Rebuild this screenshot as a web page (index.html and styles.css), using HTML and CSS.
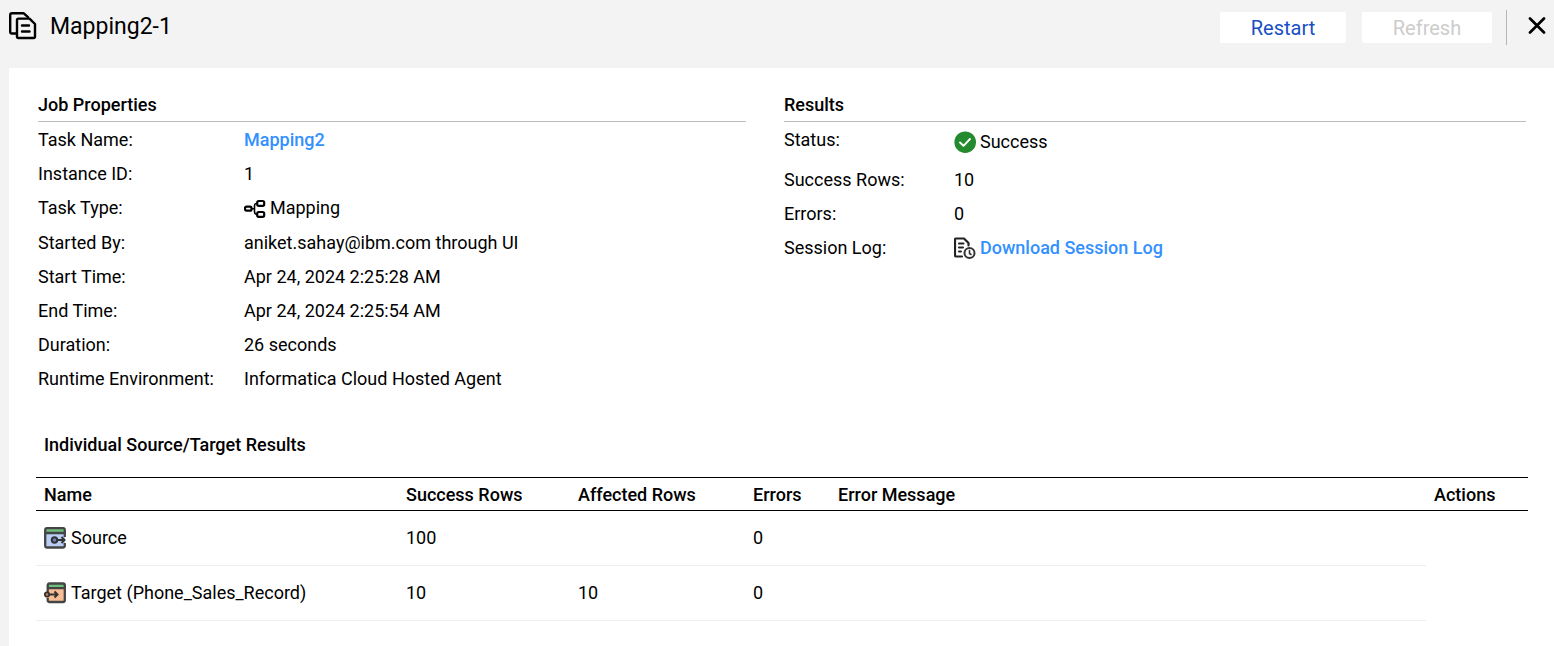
FILE: index.html
```html
<!DOCTYPE html>
<html lang="en">
<head>
<meta charset="utf-8">
<meta name="viewport" content="width=device-width, initial-scale=1">
<title>Mapping2-1</title>
<link rel="stylesheet" href="styles.css">
</head>
<body>
<header class="topbar">
  <svg class="job-icon" viewBox="0 0 28 28" fill="none" stroke="#000" stroke-width="2.400" stroke-linejoin="round" stroke-linecap="round" aria-hidden="true">
    <path d="M7 21.500H3Q1.200 21.500 1.200 19.700V3Q1.200 1.200 3 1.200H14.500L19 5.200"/>
    <path d="M9.500 6.600H20.500L26 12V24.500Q26 26 24.500 26H9.500Q8 26 8 24.500V8Q8 6.600 9.500 6.600Z"/>
    <path d="M13 13.500H20M13 19.500H20.500"/>
  </svg>
  <h1 class="title">Mapping2-1</h1>
  <div class="actions">
    <button class="button" type="button">Restart</button>
    <button class="button button-refresh" type="button" disabled>Refresh</button>
    <button class="close" type="button" aria-label="Close">
      <svg class="close-icon" viewBox="0 0 18 18" fill="none" stroke="#000" stroke-width="2.700" stroke-linecap="round" aria-hidden="true"><path d="M2 1.500L16 15.500M16 1.500L2 15.500"/></svg>
    </button>
  </div>
</header>
<main class="panel">
  <div class="summary">
    <section>
      <h2 class="heading">Job Properties</h2>
      <dl class="properties">
        <div class="row"><dt>Task Name:</dt><dd><a class="link" href="#task">Mapping2</a></dd></div>
        <div class="row"><dt>Instance ID:</dt><dd>1</dd></div>
        <div class="row row-type"><dt>Task Type:</dt><dd>
          <svg class="icon" viewBox="0 0 22 22" fill="none" stroke="#000" stroke-width="2.200" aria-hidden="true">
            <rect x="1" y="9.700" width="6.500" height="4" rx="1.500"/>
            <rect x="13.200" y="4" width="7" height="4.800" rx="1.600"/>
            <rect x="13.200" y="15" width="7" height="4.800" rx="1.600"/>
            <path d="M8 11.700H10.500M13.500 6.300Q10.500 6.300 10.500 8.500V15Q10.500 17.400 13.500 17.400" stroke-width="1.600"/>
          </svg>Mapping</dd></div>
        <div class="row"><dt>Started By:</dt><dd>aniket.sahay@ibm.com through UI</dd></div>
        <div class="row"><dt>Start Time:</dt><dd>Apr 24, 2024 2:25:28 AM</dd></div>
        <div class="row"><dt>End Time:</dt><dd>Apr 24, 2024 2:25:54 AM</dd></div>
        <div class="row"><dt>Duration:</dt><dd>26 seconds</dd></div>
        <div class="row"><dt>Runtime Environment:</dt><dd>Informatica Cloud Hosted Agent</dd></div>
      </dl>
    </section>
    <section>
      <h2 class="heading">Results</h2>
      <dl class="properties results">
        <div class="row row-status"><dt>Status:</dt><dd>
          <svg class="icon" viewBox="0 0 22 22" fill="none" aria-hidden="true">
            <circle cx="11.200" cy="11.200" r="10.800" fill="#248a2e"/>
            <path d="M6 11.500L9.500 14.800L16 8" stroke="#fff" stroke-width="1.900" stroke-linecap="round" stroke-linejoin="round"/>
          </svg>Success</dd></div>
        <div class="row"><dt>Success Rows:</dt><dd>10</dd></div>
        <div class="row"><dt>Errors:</dt><dd>0</dd></div>
        <div class="row"><dt>Session Log:</dt><dd>
          <svg class="icon" viewBox="0 0 22 22" fill="none" stroke="#222" stroke-width="2.200" stroke-linecap="round" stroke-linejoin="round" aria-hidden="true">
            <path d="M8 19.500H2Q1 19.500 1 18.500V2.500Q1 1.500 2 1.500H10L14.500 6V8.500"/>
            <path d="M5 6.500H9.500M5 10.500H9M5 14.500H7" stroke-width="2"/>
            <circle cx="15.500" cy="16" r="5" fill="#fff" stroke="#333" stroke-width="2"/>
            <path d="M15.500 13.500V16.500L17 17.500" stroke="#333" stroke-width="1.600"/>
          </svg><a class="link" href="#log">Download Session Log</a></dd></div>
      </dl>
    </section>
  </div>
  <section class="details">
    <h2 class="details-title" id="details-title">Individual Source/Target Results</h2>
    <table class="table" aria-labelledby="details-title">
      <thead>
        <tr><th class="col-name">Name</th><th class="col-success">Success Rows</th><th class="col-affected">Affected Rows</th><th class="col-errors">Errors</th><th>Error Message</th><th class="col-actions">Actions</th></tr>
      </thead>
      <tbody>
        <tr>
          <td><span class="name"><svg class="icon" viewBox="0 0 22 22" fill="none" aria-hidden="true">
            <rect x="1" y="1" width="20" height="20" rx="2" fill="#b9cdf5"/>
            <path d="M1 5V3Q1 1 3 1H19Q21 1 21 3V5Z" fill="#6fbf7c"/>
            <path d="M20.800 10V3Q20.800 1.200 19 1.200H3Q1.200 1.200 1.200 3V18.500Q1.200 20.500 3 20.500H18.800Q20.800 20.500 20.800 18.500V16M1 6H21" stroke="#444" stroke-width="2.300"/>
            <path d="M13 13H20M17.500 10L20.500 13L17.500 16" stroke="#333" stroke-width="2"/>
            <circle cx="10.500" cy="13" r="2.700" fill="#6680b8" stroke="#333" stroke-width="2"/>
          </svg>Source</span></td><td>100</td><td></td><td>0</td><td></td><td></td>
        </tr>
        <tr>
          <td><span class="name"><svg class="icon" viewBox="0 0 22 22" fill="none" aria-hidden="true">
            <rect x="3" y="1.500" width="19" height="18.500" rx="2" fill="#f8bd94"/>
            <path d="M3 6V3.500Q3 1.500 5 1.500H20Q22 1.500 22 3.500V6Z" fill="#6fbf7c"/>
            <path d="M3.700 10V3.500Q3.700 1.500 5.500 1.500H19Q20.800 1.500 20.800 3.500V18Q20.800 20 19 20H5.500Q3.700 20 3.700 18V16M3.500 6.200H21" stroke="#444" stroke-width="2.300"/>
            <path d="M5 12.500H13.500M10.500 9.500L13.500 12.500L10.500 15.500" stroke="#333" stroke-width="2"/>
            <circle cx="3" cy="12.500" r="2.200" fill="#c98251" stroke="#333" stroke-width="1.800"/>
          </svg>Target (Phone_Sales_Record)</span></td><td>10</td><td>10</td><td>0</td><td></td><td></td>
        </tr>
      </tbody>
    </table>
  </section>
</main>
</body>
</html>
```

FILE: styles.css
```css
* {
  box-sizing: border-box;
}

body {
  margin: 0;
  min-height: 100vh;
  display: flex;
  flex-direction: column;
  background: #f3f3f3;
  color: #000;
  font: 400 18px/22px Roboto, Arial, sans-serif;
}

h1, h2, dl, dd {
  margin: 0;
}

.topbar {
  display: flex;
  align-items: center;
  height: 68px;
  padding: 0 8px 14px 9px;
}

.job-icon {
  width: 28px;
  height: 28px;
  margin: -2px 13px 0 0;
}

.title {
  font-size: 23px;
  font-weight: 400;
  line-height: 28px;
}

.actions {
  display: flex;
  align-items: center;
  margin-left: auto;
}

.button {
  width: 126px;
  height: 31px;
  margin-right: 16px;
  padding: 1px 0 0;
  border: 0;
  border-radius: 2px;
  background: #fff;
  color: #1a4fc4;
  font: 400 20px/24px Roboto, Arial, sans-serif;
  cursor: pointer;
}

.button-refresh {
  width: 130px;
  margin-right: 14px;
  color: #ccc;
  cursor: default;
}

.close {
  display: flex;
  align-items: center;
  height: 35px;
  padding: 0 0 2px 21px;
  border: 0;
  border-left: 1px solid #b5b5b5;
  background: none;
  cursor: pointer;
}

.close-icon {
  width: 18px;
  height: 18px;
}

.panel {
  flex: 1;
  margin-left: 9px;
  padding: 26px 28px 24px 29px;
  background: #fff;
}

.summary {
  display: grid;
  grid-template-columns: 708fr 742fr;
  gap: 38px;
}

.heading {
  padding-bottom: 5px;
  border-bottom: 1px solid #bbb;
  font-size: 18px;
  font-weight: 500;
}

.properties {
  padding-top: 1px;
}

.row {
  display: grid;
  grid-template-columns: 206px 1fr;
  min-height: 34px;
  padding-top: 6px;
}

.results .row {
  grid-template-columns: 170px 1fr;
}

.row dd {
  display: flex;
  align-items: center;
  gap: 4px;
  height: 22px;
}

.row-type {
  min-height: 35px;
}

.results .row-status {
  min-height: 40px;
}

.row-status dd {
  margin-top: 2px;
}

.icon {
  flex: none;
  width: 22px;
  height: 22px;
}

.link {
  color: #3390ff;
  font-weight: 500;
  text-decoration: none;
}

.details {
  margin: 38px -2px 0;
}

.details-title {
  padding: 0 8px;
  font-size: 18px;
  font-weight: 500;
}

.table {
  width: 100%;
  margin-top: 21px;
  border-collapse: collapse;
  table-layout: fixed;
}

.table th {
  height: 33px;
  padding: 1px 8px 0;
  border-top: 1px solid #000;
  border-bottom: 1px solid #000;
  font-weight: 500;
  text-align: left;
}

.table td {
  height: 55px;
  padding: 0 8px;
  border-bottom: 1px solid #eee;
}

.table td:last-child {
  border-bottom: 0;
}

.name {
  display: flex;
  align-items: center;
  gap: 5px;
}

.col-name {
  width: 362px;
}

.col-success {
  width: 172px;
}

.col-affected {
  width: 175px;
}

.col-errors {
  width: 85px;
}

.col-actions {
  width: 102px;
}
```
